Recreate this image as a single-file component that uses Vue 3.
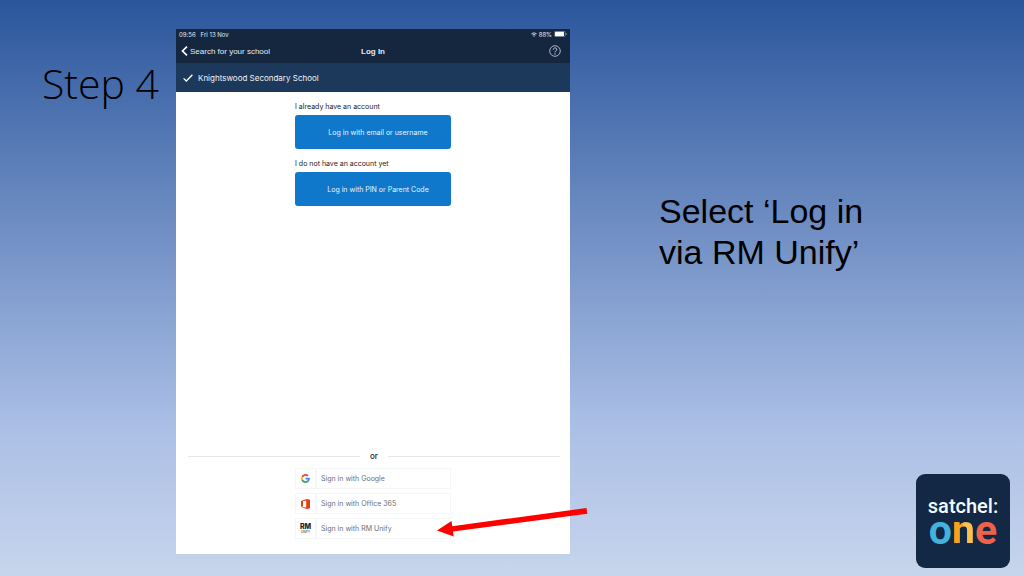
<script setup>
const accountOptions = [
  { note: 'I already have an account', action: 'Log in with email or username' },
  { note: 'I do not have an account yet', action: 'Log in with PIN or Parent Code' },
]
const providers = [
  { id: 'google', label: 'Sign in with Google' },
  { id: 'office', label: 'Sign in with Office 365' },
  { id: 'rm', label: 'Sign in with RM Unify' },
]
</script>

<template>
  <main class="slide">
    <h1 class="step">Step 4</h1>

    <section class="tablet">
      <header class="top">
        <div class="status">
          <span class="clock">09:56</span>
          <span>Fri 13 Nov</span>
          <span class="power">
            <svg width="6" height="5" viewBox="0 0 6 5" aria-hidden="true">
              <path d="M.4 1.8Q3-.2 5.6 1.8M1.5 3Q3 1.9 4.5 3" fill="none" stroke="#dce3ec" stroke-width=".9" />
              <circle cx="3" cy="4.1" r=".7" fill="#dce3ec" />
            </svg>
            <span>88%</span>
            <svg width="13" height="6" viewBox="0 0 13 6" aria-hidden="true">
              <rect x=".3" y=".3" width="11" height="5.4" rx="1.3" fill="none" stroke="#8c9aab" stroke-width=".6" />
              <rect x="1" y=".8" width="9" height="4.4" rx=".7" fill="#fff" />
              <path d="M12.2 2v2" stroke="#8c9aab" stroke-width=".8" />
            </svg>
          </span>
        </div>
        <nav class="nav">
          <a href="#" class="back">
            <svg width="7" height="10" viewBox="0 0 7 10" aria-hidden="true">
              <path d="M6 .6 1.5 5 6 9.4" fill="none" stroke="#fff" stroke-width="1.7" />
            </svg>
            Search for your school
          </a>
          <strong>Log In</strong>
          <button class="help" aria-label="Help">
            <svg width="12" height="12" viewBox="0 0 12 12" aria-hidden="true">
              <circle cx="6" cy="6" r="5.3" fill="none" stroke="#b5c3d2" stroke-width=".9" />
              <path d="M4.3 4.7C4.3 2.3 7.8 2.4 7.8 4.5 7.8 5.8 6 5.8 6 7.3" fill="none" stroke="#c8d3df" stroke-width="1" />
              <circle cx="6" cy="8.9" r=".7" fill="#c8d3df" />
            </svg>
          </button>
        </nav>
      </header>

      <div class="school">
        <svg width="10" height="8" viewBox="0 0 10 8" aria-hidden="true">
          <path d="M.6 4.4 3.3 7 9.4.8" fill="none" stroke="#fff" stroke-width="1.3" />
        </svg>
        Knightswood Secondary School
      </div>

      <div class="body">
        <div class="accounts">
          <template v-for="option in accountOptions" :key="option.action">
            <p>{{ option.note }}</p>
            <button class="primary">{{ option.action }}</button>
          </template>
        </div>

        <div class="or">or</div>

        <div class="providers">
          <button v-for="p in providers" :key="p.id" class="provider">
            <span class="mark">
              <svg v-if="p.id === 'google'" width="9" height="9" viewBox="0 0 48 48" aria-hidden="true">
                <path fill="#ea4335" d="M24 9.5c3.5 0 6.7 1.2 9.2 3.6l6.9-6.9C35.9 2.4 30.5 0 24 0 14.6 0 6.5 5.4 2.6 13.2l8 6.2C12.4 13.7 17.7 9.5 24 9.5z" />
                <path fill="#4285f4" d="M47 24.6c0-1.6-.2-3.1-.4-4.6H24v9h12.9c-.6 3-2.3 5.5-4.8 7.2l7.7 6C44.4 38 47 31.8 47 24.6z" />
                <path fill="#fbbc05" d="M10.5 28.6c-.5-1.5-.8-3-.8-4.6s.3-3.1.8-4.6l-8-6.2C.9 16.5 0 20.1 0 24s.9 7.5 2.6 10.8z" />
                <path fill="#34a853" d="M24 48c6.5 0 11.9-2.1 15.9-5.8l-7.7-6c-2.2 1.5-4.9 2.3-8.2 2.3-6.3 0-11.6-4.2-13.5-9.9l-8 6.2C6.5 42.6 14.6 48 24 48z" />
              </svg>
              <svg v-else-if="p.id === 'office'" width="9" height="10" viewBox="0 0 9 10" aria-hidden="true">
                <path fill="#e2400f" d="M0 1.9 5.700 0 9 .8v8.400L5.700 10 0 8l5.200.6V1.600L2 2.300v5L0 8z" />
              </svg>
              <span v-else class="rm"><b>RM</b><small>UNIFY</small></span>
            </span>
            <span class="label">{{ p.label }}</span>
          </button>
        </div>
      </div>

      <svg class="arrow" width="152" height="32" viewBox="0 0 152 32" aria-hidden="true">
        <path fill="#fe0000" d="M1 25.5 15.500 16l.8 5.200L150.500 3l.8 5.800L17 26.600l.7 5z" />
      </svg>
    </section>

    <aside class="side">
      <p class="instruction">Select ‘Log in<br />via RM Unify’</p>
      <div class="logo">
        <span class="satchel">satchel:</span>
        <span class="one"><i class="o">o</i><i class="n">n</i><i class="e">e</i></span>
      </div>
    </aside>
  </main>
</template>

<style>
body {
  margin: 0;
}
</style>

<style scoped>
.slide {
  box-sizing: border-box;
  min-height: 100vh;
  display: grid;
  grid-template-columns: 176fr 394fr 454fr;
  background: linear-gradient(#2b569c 0%, #abbfe6 74%, #c7d5ec 100%);
  font-family: "Liberation Sans", Arial, sans-serif;
  color: #000;
}
button {
  font: inherit;
  border: 0;
  padding: 0;
  background: none;
}
.step {
  margin: 57px 0 0;
  padding-right: 17px;
  text-align: right;
  font: 300 41px/52px "Open Sans", sans-serif;
}
.tablet {
  position: relative;
  margin: 29px 0 22px;
  display: flex;
  flex-direction: column;
  background: #fff;
  font-family: Inter, "Liberation Sans", sans-serif;
  font-size: 8px;
}
.top {
  background: #14273f;
  color: #e6ebf1;
}
.status {
  display: flex;
  align-items: center;
  gap: 5px;
  height: 10px;
  padding: 0 3px;
  font-size: 6px;
}
.power {
  margin-left: auto;
  display: flex;
  align-items: center;
  gap: 2px;
}
.nav {
  display: grid;
  grid-template-columns: 1fr auto 1fr;
  align-items: center;
  height: 24px;
  padding: 0 9px 0 5px;
  font-family: "Liberation Sans", Arial, sans-serif;
}
.nav strong {
  padding-left: 4px;
}
.back {
  display: flex;
  align-items: center;
  gap: 2px;
  color: inherit;
  text-decoration: none;
}
.help {
  justify-self: end;
  display: flex;
}
.school {
  display: flex;
  align-items: center;
  gap: 5px;
  height: 29px;
  padding: 0 7px;
  background: #1c385a;
  color: #f0f3f7;
}
.body {
  flex: 1;
  display: flex;
  flex-direction: column;
  padding-bottom: 15px;
}
.accounts,
.providers {
  width: 156px;
  margin: 0 auto;
  display: flex;
  flex-direction: column;
}
.accounts {
  padding-top: 10px;
  font-size: 7px;
  color: #222;
}
.accounts p {
  margin: 0 0 3px;
  line-height: 10px;
}
.primary {
  height: 34px;
  margin-bottom: 10px;
  padding-left: 10px;
  border-radius: 3px;
  background: #0f78cb;
  color: #e9f4ff;
}
.or {
  display: flex;
  align-items: center;
  gap: 10px;
  margin: auto 10px 7px 12px;
  line-height: 10px;
  font-weight: 500;
  color: #222;
}
.or::before,
.or::after {
  content: "";
  flex: 1;
  height: 1px;
  background: #e6e8ea;
}
.providers {
  gap: 4px;
}
.provider {
  display: flex;
  height: 21px;
  color: #6d7074;
  font-size: 7px;
  text-align: left;
}
.mark,
.label {
  box-sizing: border-box;
  display: flex;
  align-items: center;
  border: 1px solid #f5f6f7;
}
.mark {
  width: 21px;
  justify-content: center;
}
.label {
  flex: 1;
  padding-left: 4px;
}
.rm {
  display: flex;
  flex-direction: column;
  align-items: center;
  color: #222;
}
.rm b {
  font-size: 7px;
  font-weight: 800;
  line-height: 6px;
}
.rm small {
  font-size: 3px;
  line-height: 4px;
}
.arrow {
  position: absolute;
  right: -18px;
  bottom: 17px;
}
.side {
  display: flex;
  flex-direction: column;
  justify-content: space-between;
}
.instruction {
  margin: 191px 0 0 89px;
  font-size: 34px;
  line-height: 41px;
}
.logo {
  align-self: flex-end;
  box-sizing: border-box;
  width: 94px;
  height: 94px;
  margin: 0 14px 8px 0;
  padding-top: 21px;
  border-radius: 9px;
  background: #132844;
  display: flex;
  flex-direction: column;
  align-items: center;
  font-family: Roboto, sans-serif;
}
.satchel {
  color: #f4fbff;
  font-size: 20px;
  font-weight: 500;
  line-height: 22px;
}
.one {
  display: flex;
  font-size: 41px;
  font-weight: 700;
  line-height: 26px;
}
.one i {
  font-style: normal;
}
.o {
  color: #42b4dc;
}
.n {
  background: linear-gradient(90deg, #f5a31c 50%, #fcc04c 50%);
  background-clip: text;
  -webkit-background-clip: text;
  color: transparent;
}
.e {
  color: #ee614b;
}
</style>
